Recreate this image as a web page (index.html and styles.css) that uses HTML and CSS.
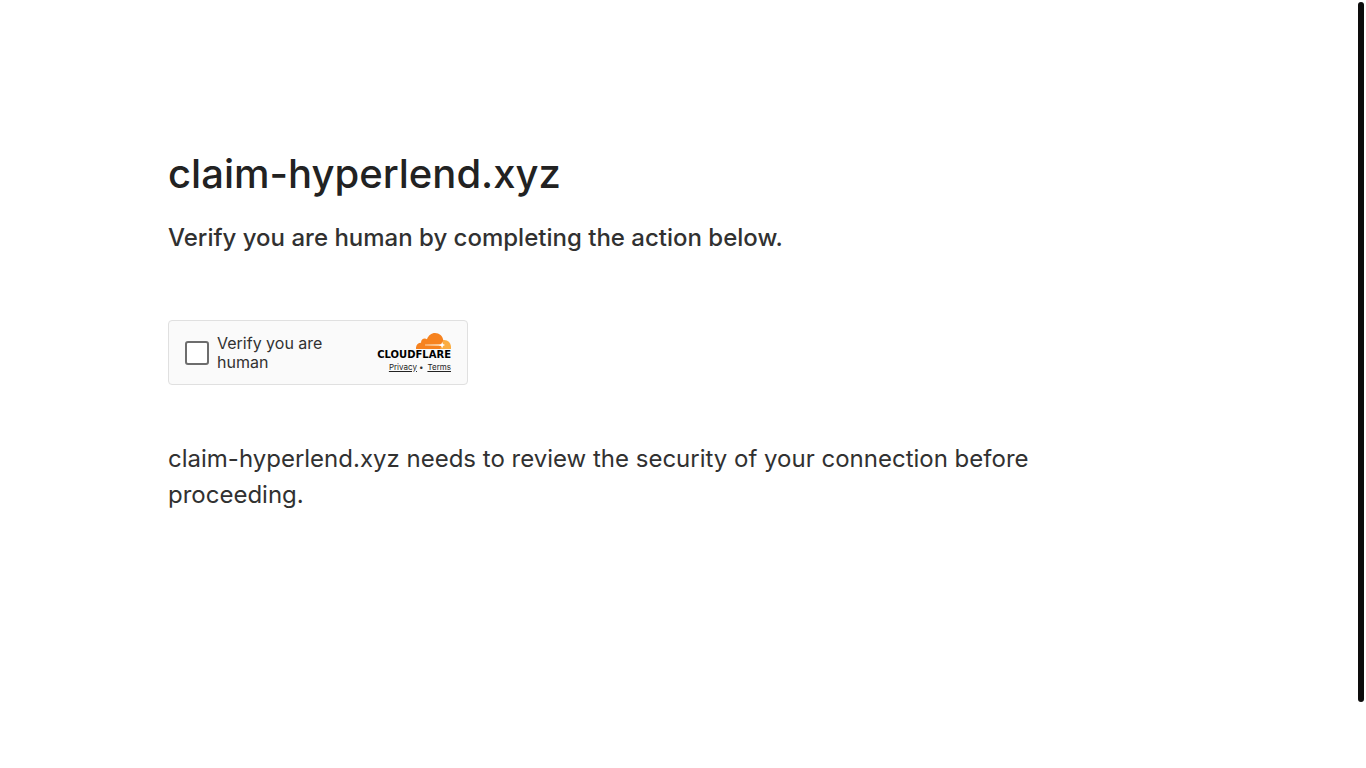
FILE: index.html
```html
<!DOCTYPE html>
<html lang="en">
<head>
  <meta charset="UTF-8">
  <meta name="viewport" content="width=device-width, initial-scale=1">
  <title>Just a moment...</title>
  <link rel="stylesheet" href="styles.css">
</head>
<body>

  <main class="content">
    <h1>claim-hyperlend.xyz</h1>
    <h2>Verify you are human by completing the action below.</h2>

    <div class="widget">
      <label class="check">
        <input type="checkbox" name="verify">
        <span>Verify you are human</span>
      </label>

      <div class="branding">
        <svg class="cloud" viewBox="0 0 35 16" width="35" height="16" aria-hidden="true">
          <path fill="#fbad41" d="M27 7.2C31.500 6.500 35 10 35 14.300V16H23.500z"/>
          <path fill="#f6821f" d="M24.300 16H0c-.4-3.600 2-6.300 5.100-6.200C4.600 6.500 8.200 4.200 11 6.200 12.300 2.400 15.400 0 19 0c4.300 0 7.700 2.900 8.300 7.200l-2 5z"/>
          <path fill="#fbd0a5" d="M9 11.500l16-.4v1.800L9 12.500z"/>
          <path fill="#fff" d="M26.200 9l.8 2.100 2 1-2 .9-.8 2.300-1.100-2.300-2.100-.7 2.300-1.200z"/>
        </svg>
        <div class="wordmark">CLOUDFLARE</div>
        <div class="links">
          <a href="#privacy">Privacy</a><span class="dot">•</span><a href="#terms">Terms</a>
        </div>
      </div>
    </div>

    <p>claim-hyperlend.xyz needs to review the security of your connection before proceeding.</p>
  </main>

  <div class="scroll-thumb"></div>

</body>
</html>
```

FILE: styles.css
```css
* {
  box-sizing: border-box;
  margin: 0;
  padding: 0;
}
body {
  font-family: Inter, "Liberation Sans", sans-serif;
  color: #313131;
  background: #fff;
}
.content {
  max-width: 1078px;
  margin: 144px auto;
  padding: 0 24px;
}
h1 {
  font-size: 40px;
  line-height: 60px;
  font-weight: 500;
  color: #222;
  margin-bottom: 16px;
}
h2 {
  font-size: 24px;
  line-height: 36px;
  font-weight: 500;
}
.content p {
  max-width: 960px;
  font-size: 24px;
  line-height: 36px;
}

/* Verification box */
.widget {
  display: flex;
  align-items: center;
  justify-content: space-between;
  width: 300px;
  height: 65px;
  margin: 64px 0 56px;
  padding: 0 16px;
  border: 1px solid #e0e0e0;
  border-radius: 4px;
  background: #fafafa;
}
.check {
  display: flex;
  align-items: center;
  gap: 8px;
  width: 152px;
  font-size: 16px;
  line-height: 19px;
  cursor: pointer;
}
.check input {
  appearance: none;
  flex: none;
  width: 24px;
  height: 24px;
  border: 2px solid #6d6d6d;
  border-radius: 3px;
  background: #fff;
}
.check input:checked {
  background: #f6821f;
}
.branding {
  display: flex;
  flex-direction: column;
  align-items: flex-end;
}
.cloud {
  display: block;
}
.wordmark {
  font-family: "DejaVu Sans", sans-serif;
  font-size: 10px;
  line-height: 12px;
  font-weight: 700;
  color: #000;
}
.links {
  display: flex;
  font-size: 8px;
  line-height: 12px;
}
.links a {
  color: #232323;
}
.dot {
  margin: 0 4px 0 2px;
}

/* Overlay scrollbar */
.scroll-thumb {
  position: fixed;
  top: 2px;
  right: 2px;
  bottom: 66px;
  width: 6px;
  border-radius: 3px;
  background: #0d0c0c;
}
```
